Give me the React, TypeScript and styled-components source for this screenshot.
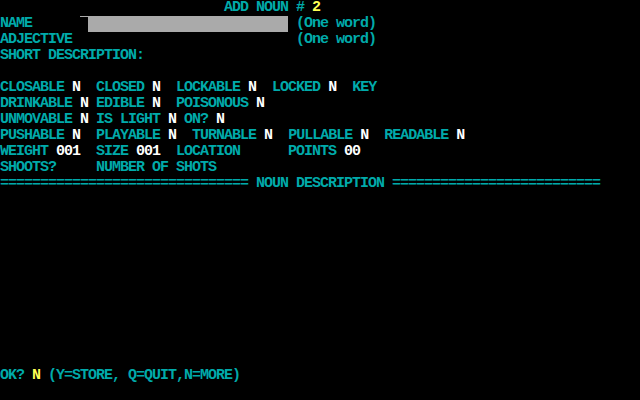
import React from "react";
import styled, { createGlobalStyle } from "styled-components";

const Global = createGlobalStyle`
  html, body { margin: 0; padding: 0; background: #000; }
`;

const Screen = styled.div`
  width: 640px;
  height: 400px;
  background: #000;
  display: flex;
  flex-direction: column;
  font-family: "Liberation Mono", "DejaVu Sans Mono", monospace;
  font-weight: bold;
  font-size: 15px;
  letter-spacing: -1px;
  color: #00aaaa;
  overflow: hidden;
`;

const Row = styled.div`
  height: 16px;
  line-height: 16px;
  white-space: pre;
  display: flex;
  align-items: stretch;
`;

const Txt = styled.span<{ $tone?: "label" | "value" | "hi" }>`
  color: ${(p) => (p.$tone === "value" ? "#ffffff" : p.$tone === "hi" ? "#ffff55" : "#00aaaa")};
`;

const Cursor = styled.span`
  width: 8px;
  box-sizing: border-box;
  border-top: 1px solid #aaaaaa;
`;

const InputBar = styled.span<{ $cols: number }>`
  width: ${(p) => p.$cols * 8}px;
  background: #aaaaaa;
`;

const Pad = styled.span<{ $cols: number }>`
  width: ${(p) => p.$cols * 8}px;
`;

type Seg = [string, "label" | "value" | "hi"];

const L = (s: string): Seg => [s, "label"];
const V = (s: string): Seg => [s, "value"];
const H = (s: string): Seg => [s, "hi"];

const Line: React.FC<{ segs: Seg[] }> = ({ segs }) => (
  <Row>
    {segs.map(([t, tone], i) => (
      <Txt key={i} $tone={tone}>
        {t}
      </Txt>
    ))}
  </Row>
);

const rows: Seg[][] = [
  [L("CLOSABLE "), V("N"), L("  CLOSED "), V("N"), L("  LOCKABLE "), V("N"), L("  LOCKED "), V("N"), L("  KEY")],
  [L("DRINKABLE "), V("N"), L(" EDIBLE "), V("N"), L("  POISONOUS "), V("N")],
  [L("UNMOVABLE "), V("N"), L(" IS LIGHT "), V("N"), L(" ON? "), V("N")],
  [
    L("PUSHABLE "), V("N"), L("  PLAYABLE "), V("N"), L("  TURNABLE "), V("N"),
    L("  PULLABLE "), V("N"), L("  READABLE "), V("N"),
  ],
  [L("WEIGHT "), V("001"), L("  SIZE "), V("001"), L("  LOCATION      POINTS "), V("00")],
  [L("SHOOTS?     NUMBER OF SHOTS")],
  [L("=".repeat(31) + " NOUN DESCRIPTION " + "=".repeat(26))],
];

export default function App() {
  return (
    <>
      <Global />
      <Screen>
        <Line segs={[L(" ".repeat(28) + "ADD NOUN # "), H("2")]} />
        <Row>
          <Txt>{"NAME      "}</Txt>
          <Cursor />
          <InputBar $cols={25} />
          <Txt>{" (One word)"}</Txt>
        </Row>
        <Row>
          <Txt>{"ADJECTIVE"}</Txt>
          <Pad $cols={28} />
          <Txt>{"(One word)"}</Txt>
        </Row>
        <Line segs={[L("SHORT DESCRIPTION:")]} />
        <Row />
        {rows.map((r, i) => (
          <Line key={i} segs={r} />
        ))}
        {Array.from({ length: 11 }).map((_, i) => (
          <Row key={"e" + i} />
        ))}
        <Line segs={[L("OK? "), H("N"), L(" (Y=STORE, Q=QUIT,N=MORE)")]} />
        <Row />
      </Screen>
    </>
  );
}
